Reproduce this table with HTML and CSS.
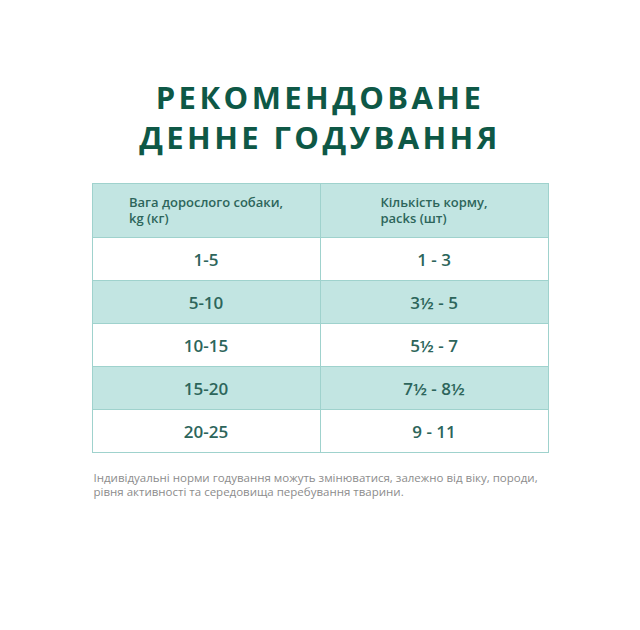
FILE: index.html
```html
<!DOCTYPE html>
<html lang="uk">
<head>
<meta charset="utf-8">
<link rel="stylesheet" href="styles.css">
</head>
<body>
<main class="page">
  <h1 class="title">РЕКОМЕНДОВАНЕ<br>ДЕННЕ ГОДУВАННЯ</h1>
  <table class="feed">
    <thead>
      <tr>
        <th><span class="hd"><span class="ln">Вага дорослого собаки,</span><span class="ln">kg (кг)</span></span></th>
        <th><span class="hd"><span class="ln">Кількість корму,</span><span class="ln">packs (шт)</span></span></th>
      </tr>
    </thead>
    <tbody>
      <tr><td>1-5</td><td>1 - 3</td></tr>
      <tr class="alt"><td>5-10</td><td>3½ - 5</td></tr>
      <tr><td>10-15</td><td>5½ - 7</td></tr>
      <tr class="alt"><td>15-20</td><td>7½ - 8½</td></tr>
      <tr><td>20-25</td><td>9 - 11</td></tr>
    </tbody>
  </table>
  <p class="note">Індивідуальні норми годування можуть змінюватися, залежно від віку, породи, рівня активності та середовища перебування тварини.</p>
</main>
</body>
</html>
```
FILE: styles.css
```css
html, body {
  margin: 0;
  padding: 0;
  background: #ffffff;
}
.page {
  width: 457px;
  margin: 0 auto;
  padding-top: 77px;
  font-family: "Open Sans", "Liberation Sans", sans-serif;
}
.title {
  margin: 0 0 26px;
  text-align: center;
  font-size: 31px;
  line-height: 40px;
  font-weight: 750;
  letter-spacing: 3.4px;
  color: #0e5846;
}
.feed {
  width: 457px;
  border-collapse: collapse;
  table-layout: fixed;
}
.feed th, .feed td {
  border: 1px solid #9fd2cd;
  width: 50%;
  text-align: center;
  color: #2d655b;
}
.feed th {
  height: 53px;
  padding: 0;
  background: #c2e5e2;
  font-size: 13px;
  line-height: 15.5px;
  font-weight: 600;
}
.hd {
  display: inline-flex;
  flex-direction: column;
  text-align: left;
}
.ln {
  display: block;
}
.feed td {
  height: 42px;
  padding: 0;
  font-size: 17px;
  font-weight: 600;
}
.feed tr.alt td {
  background: #c2e5e2;
}
.note {
  margin: 18px 0 0;
  padding-left: 2px;
  font-size: 11.5px;
  line-height: 14px;
  color: #8c8c8c;
}
```
